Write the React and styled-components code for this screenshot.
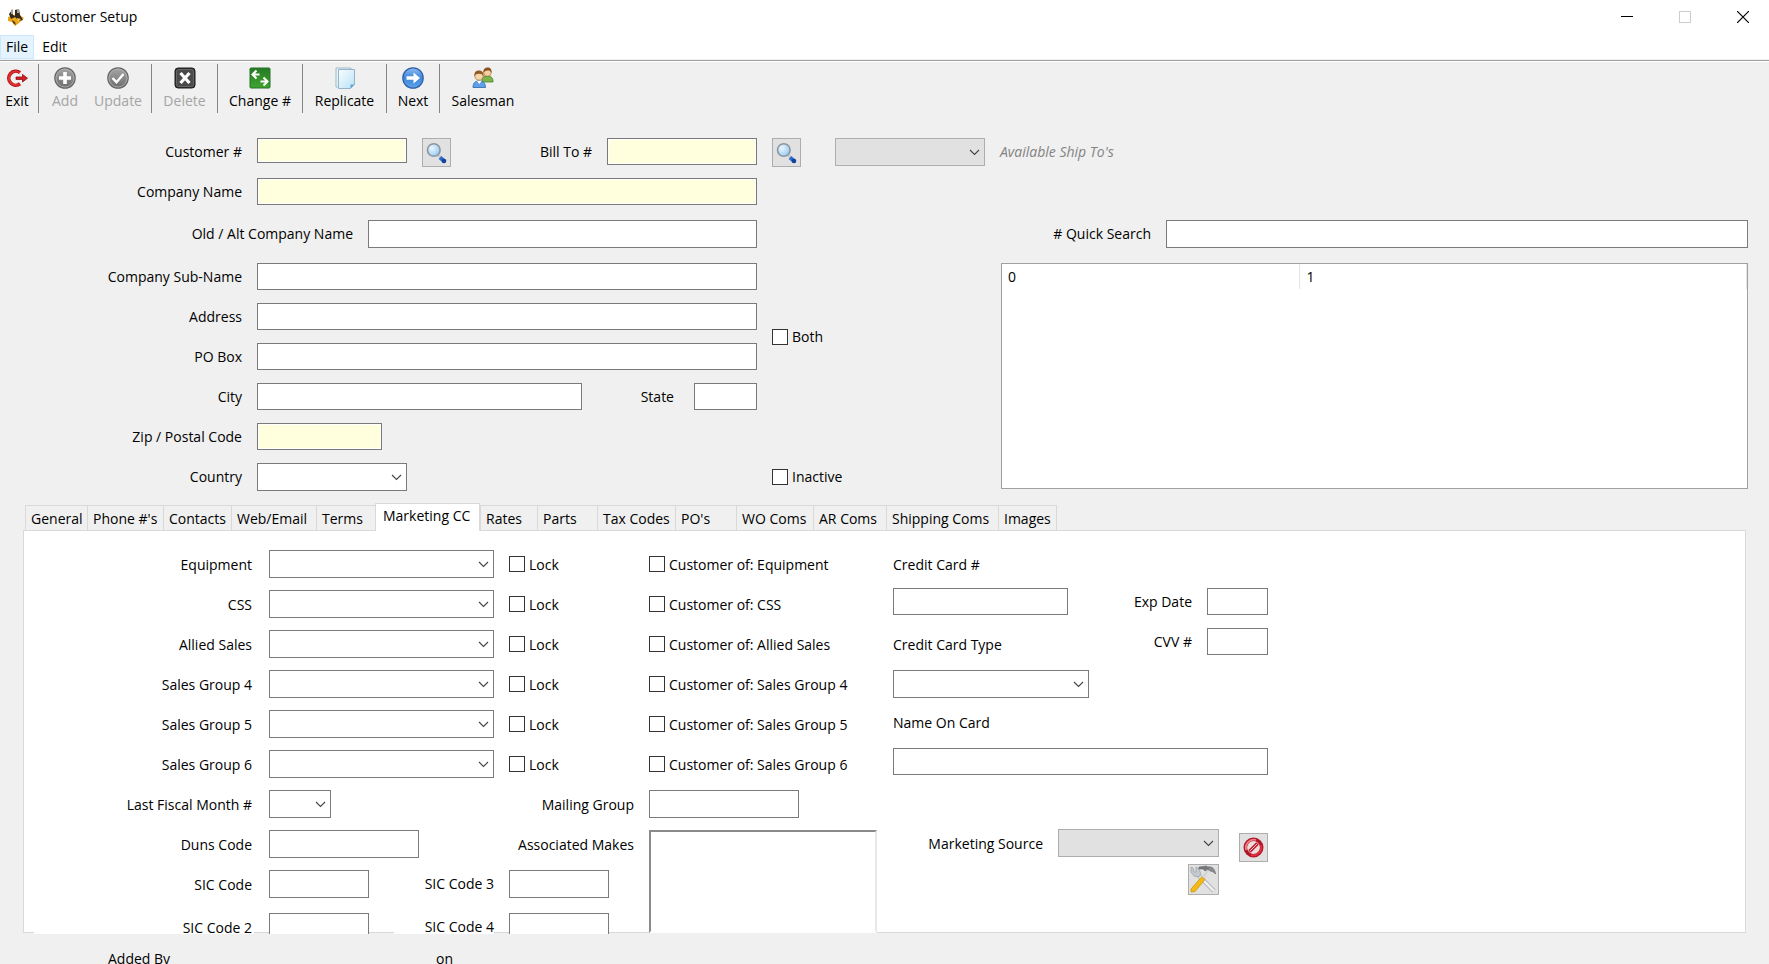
import React, { useState } from "react";
import styled, { createGlobalStyle, css } from "styled-components";

const GlobalStyle = createGlobalStyle`
  * {
    box-sizing: border-box;
  }
  body {
    margin: 0;
    background: #f0f0f0;
  }
  body, button, input, select, textarea {
    font-family: "Open Sans", "Noto Sans", sans-serif;
    font-size: 14px;
    color: #000;
  }
`;

const Window = styled.div`
  display: flex;
  flex-direction: column;
  height: 100vh;
  overflow: hidden;
  background: #f0f0f0;
`;

/* ---------- title bar and menu ---------- */

const TitleBar = styled.header`
  display: flex;
  align-items: center;
  height: 35px;
  flex-shrink: 0;
  padding: 0 20px 2px 7px;
  gap: 7px;
  background: #fff;
`;

const Title = styled.h1`
  flex: 1;
  margin: 0;
  font-size: 14px;
  font-weight: 400;
`;

const WindowButtons = styled.div`
  display: flex;
  gap: 46px;
`;

const WindowButton = styled.button`
  width: 12px;
  height: 12px;
  padding: 0;
  border: none;
  background: none;

  svg {
    display: block;
  }
`;

const MenuBar = styled.nav`
  display: flex;
  gap: 2px;
  height: 25px;
  flex-shrink: 0;
  background: #fff;
  border-bottom: 1px solid #f0f0f0;
`;

const MenuItem = styled.button`
  height: 24px;
  padding: 0 5px;
  line-height: 22px;
  border: 1px solid ${(p) => (p.$active ? "#cce8ff" : "transparent")};
  background: ${(p) => (p.$active ? "#e5f3ff" : "transparent")};
`;

/* ---------- toolbar ---------- */

const ToolBar = styled.div`
  display: flex;
  height: 55px;
  flex-shrink: 0;
  padding-top: 3px;
  border-top: 1px solid #a0a0a0;
  box-shadow: inset 0 1px 0 #fff;
`;

const ToolGroup = styled.div`
  display: flex;
  justify-content: ${(p) => (p.$center ? "center" : "flex-start")};
  width: ${(p) => p.$w}px;
  height: 49px;
  border-right: ${(p) => (p.$last ? "none" : "1px solid #858585")};
`;

const ToolButton = styled.button`
  display: flex;
  flex-direction: column;
  align-items: center;
  width: ${(p) => p.$w}px;
  gap: 2px;
  padding: 3px 0 0;
  border: none;
  background: none;
  line-height: 20px;
  white-space: nowrap;

  &:disabled {
    color: #a5a5a5;
  }
`;

/* ---------- form parts ---------- */

const TextInput = styled.input`
  width: ${(p) => (p.$w ? p.$w + "px" : "auto")};
  flex: ${(p) => (p.$w ? "none" : "1")};
  min-width: 0;
  height: ${(p) => p.$h || 27}px;
  padding: 0 4px;
  border: 1px solid #7a7a7a;
  border-radius: 0;
  outline: none;
  background: #fff;
  ${(p) =>
    p.$needed &&
    css`
      background: #ffffdd;
      box-shadow: inset 0 0 0 1px #fff;
    `}
`;

const SelectBox = styled.div`
  position: relative;
  width: ${(p) => p.$w}px;
  height: 28px;
  flex: none;

  select {
    appearance: none;
    width: 100%;
    height: 100%;
    padding: 0 22px 0 4px;
    border: 1px solid #7a7a7a;
    border-radius: 0;
    background: #fff;
    opacity: 1;
  }
  select:disabled {
    border-color: #adadad;
    background: #e1e1e1;
  }
  svg {
    position: absolute;
    right: 5px;
    top: 11px;
    pointer-events: none;
  }
`;

const IconButton = styled.button`
  display: grid;
  place-items: center;
  width: ${(p) => p.$w || 29}px;
  height: ${(p) => p.$h || 29}px;
  flex: none;
  padding: 0;
  border: 1px solid #adadad;
  background: #e1e1e1;
`;

const CheckLabel = styled.label`
  display: flex;
  align-items: center;
  gap: 4px;
  height: 27px;
  margin-top: ${(p) => p.$drop || 0}px;
  white-space: nowrap;

  input {
    appearance: none;
    width: 16px;
    height: 16px;
    margin: 0;
    border: 1px solid #333;
    background: #fff;
  }
  input:checked {
    background: #333;
    box-shadow: inset 0 0 0 3px #fff;
  }
`;

const Label = styled.label`
  width: ${(p) => p.$w || 242}px;
  flex: none;
  line-height: 27px;
  text-align: right;
  white-space: nowrap;
`;

const Form = styled.section`
  flex-shrink: 0;
  padding-top: 23px;
`;

const FormRow = styled.div`
  display: flex;
  align-items: flex-start;
  gap: 15px;
  height: ${(p) => p.$h || 40}px;
`;

const ShipTo = styled.div`
  display: flex;
  gap: 15px;
  margin-left: 19px;
`;

const Hint = styled.label`
  color: #838383;
  font-style: italic;
  line-height: 27px;
`;

const StateField = styled.div`
  display: flex;
  gap: 20px;
  justify-content: flex-end;
  width: 160px;
`;

const InactiveSlot = styled.div`
  margin-left: 350px;
`;

const FormBody = styled.div`
  display: flex;
`;

const FormLeft = styled.div`
  width: 1001px;
  flex: none;
`;

const QuickSearch = styled.div`
  display: flex;
  flex-direction: column;
  flex: 1;
  min-width: 0;
  padding: 42px 21px 14px 0;
`;

const ResultBox = styled.div`
  flex: 1;
  border: 1px solid #a0a0a0;
  background: #fff;
`;

const ResultTable = styled.table`
  width: 100%;
  border-collapse: collapse;
  table-layout: fixed;

  th {
    height: 25px;
    padding: 0 7px;
    border-right: 1px solid #e5e5e5;
    font-weight: 400;
    text-align: left;
  }
  th:first-child {
    width: 297px;
    padding-left: 6px;
  }
`;

/* ---------- tabs ---------- */

const TabStrip = styled.div`
  display: flex;
  align-items: flex-end;
  flex-shrink: 0;
  height: 27px;
  margin: 0 23px 0 25px;
`;

const Tab = styled.button`
  width: ${(p) => p.$w}px;
  height: 25px;
  flex: none;
  padding: 1px 0 0 5px;
  border: 1px solid #d9d9d9;
  border-width: 1px 0 0 1px;
  background: #f0f0f0;
  line-height: 22px;
  text-align: left;
  white-space: nowrap;

  &:last-child {
    border-right-width: 1px;
  }
  ${(p) =>
    p.$active &&
    css`
      z-index: 1;
      height: 28px;
      margin-bottom: -1px;
      padding: 0 0 3px 7px;
      border-right-width: 1px;
      background: #fff;
    `}
`;

const PageClip = styled.div`
  flex: 1;
  min-height: 0;
  overflow: hidden;
  padding: 0 23px 1px;
`;

const TabPage = styled.div`
  display: flex;
  gap: 15px;
  height: 100%;
  padding: 13px 0 0 9px;
  border: 1px solid #d9d9d9;
  background: #fff;
`;

const MarketingGrid = styled.div`
  display: grid;
  flex: none;
  grid-template-columns: 221px 225px 125px 229px;
  grid-template-rows: repeat(9, 40px) 46px;
  column-gap: 15px;
  align-items: center;
`;

const GridLabel = styled.label`
  justify-self: end;
  width: ${(p) => p.$w}px;
  padding-right: ${(p) => (p.$pad ? 2 : 0)}px;
  background: #fff;
  line-height: 27px;
  text-align: right;
  white-space: nowrap;
`;

const MakesList = styled.textarea`
  grid-row: 8 / 11;
  grid-column: 4;
  align-self: start;
  width: 228px;
  height: 103px;
  margin-top: 6px;
  border: 2px solid;
  border-color: #8a8a8a #e8e8e8 #fff #8a8a8a;
  border-radius: 0;
  background: #fff;
  resize: none;
`;

const SicRow = styled.div`
  display: flex;
  grid-column: 2 / 4;
  gap: 15px;
  height: 28px;
`;

const SicFirst = styled.div`
  display: flex;
  justify-content: space-between;
  width: 225px;
`;

const CardColumn = styled.div`
  width: 375px;
  flex: none;
`;

const CardGrid = styled.div`
  display: grid;
  grid-template-columns: 196px 179px;
  grid-template-rows: 40px 35px 50px 30px 46px 33px 46px;
  align-items: center;
`;

const CardSide = styled.div`
  display: flex;
  flex-direction: column;
  align-self: start;
  grid-row: 2 / 4;
  grid-column: 2;
  gap: 13px;
  padding-top: 4px;
`;

const SideField = styled.div`
  display: flex;
  justify-content: flex-end;
  gap: 15px;
  height: 27px;
`;

const CardName = styled.div`
  display: flex;
  grid-column: 1 / 3;
  grid-row: 6;
`;

const CardCell = styled.div`
  display: flex;
  grid-column: 1;
  grid-row: ${(p) => p.$row};
`;

const SourceGrid = styled.div`
  display: grid;
  grid-template-columns: 150px 161px 34px;
  grid-template-rows: 38px 34px;
  column-gap: 15px;
  align-items: center;
  justify-items: end;

  > ${IconButton} {
    align-self: end;
  }
`;

const ToolsSlot = styled.div`
  grid-column: 2;
  grid-row: 2;
`;

const Footer = styled.footer`
  display: flex;
  height: 30px;
  flex-shrink: 0;
  padding: 15px 0 0 108px;
  overflow: hidden;
  line-height: 20px;
`;

const FooterText = styled.span`
  width: 328px;
  flex: none;
`;

/* ---------- icons ---------- */

const AppIcon = () => (
  <svg width="18" height="18" viewBox="0 0 18 18">
    <path d="M1 9l5-2 5-1 6 4-5 5-4 3-3-4-4-1z" fill="#e9a61c" />
    <path d="M2 6l3-4 1 5 2 1V2l4-1 1 6 3 5-4 1-4-4-4 2z" fill="#33291d" />
    <path d="M4 2l2-1v5H4zM10 1h2v4h-2z" fill="#a9a49a" />
    <path d="M5 12l3 2 1 3-3-2z" fill="#5a3d0b" />
    <path d="M10 10l4 1-3 3z" fill="#ffc83a" />
  </svg>
);

const ExitIcon = () => (
  <svg width="22" height="22" viewBox="0 0 22 22">
    <path d="M14 5.600A7 7 0 1 0 14 16.800" fill="none" stroke="#b3121a" strokeWidth="3.600" />
    <path d="M13.800 5.800A6.800 6.800 0 1 0 13.800 16.600" fill="none" stroke="#e6322f" strokeWidth="1.800" />
    <path d="M10 10h6.500V7.400l5 3.800-5 3.800v-2.600H10z" fill="#d41f25" stroke="#8f0d12" strokeWidth=".8" />
  </svg>
);

const AddIcon = () => (
  <svg width="22" height="22" viewBox="0 0 22 22">
    <defs>
      <linearGradient id="grayBall" x1="0" y1="0" x2="0" y2="1">
        <stop offset="0" stopColor="#a6a6a6" />
        <stop offset="1" stopColor="#6c6c6c" />
      </linearGradient>
    </defs>
    <circle cx="11" cy="11" r="10.200" fill="url(#grayBall)" stroke="#666" strokeWidth="1.200" />
    <circle cx="11" cy="11" r="9" fill="none" stroke="#b5b5b5" strokeWidth=".8" />
    <path d="M9.200 5h3.600v4.200H17v3.600h-4.200V17H9.200v-4.200H5V9.200h4.200z" fill="#fff" />
  </svg>
);

const UpdateIcon = () => (
  <svg width="22" height="22" viewBox="0 0 22 22">
    <circle cx="11" cy="11" r="10.200" fill="url(#grayBall)" stroke="#666" strokeWidth="1.200" />
    <circle cx="11" cy="11" r="9" fill="none" stroke="#b5b5b5" strokeWidth=".8" />
    <path d="M5.500 11l4 4.200 7-8.200" fill="none" stroke="#fff" strokeWidth="2.400" />
  </svg>
);

const DeleteIcon = () => (
  <svg width="22" height="22" viewBox="0 0 22 22">
    <rect x="1" y="1" width="20" height="20" rx="3" fill="#333" stroke="#1c1c1c" />
    <rect x="2.500" y="2.500" width="17" height="17" rx="2" fill="#4a4a4a" stroke="#777" strokeWidth=".7" />
    <path d="M6.500 6l9 10M15.500 6l-9 10" stroke="#fff" strokeWidth="3.200" />
  </svg>
);

const ChangeIcon = () => (
  <svg width="22" height="22" viewBox="0 0 22 22">
    <defs>
      <linearGradient id="greenSquare" x1="0" y1="0" x2="0" y2="1">
        <stop offset="0" stopColor="#267a24" />
        <stop offset="1" stopColor="#3fa52f" />
      </linearGradient>
    </defs>
    <rect x="1" y="1" width="20" height="20" rx="1" fill="url(#greenSquare)" stroke="#27702a" />
    <path d="M7.500 3.500L3.500 7.500l4 4M4 7.500h6.500M14.500 10.500l4 4-4 4M18 14.500h-6.500" fill="none" stroke="#fff" strokeWidth="2" />
  </svg>
);

const ReplicateIcon = () => (
  <svg width="22" height="22" viewBox="0 0 22 22">
    <defs>
      <linearGradient id="paper" x1="0" y1="0" x2="1" y2="1">
        <stop offset="0" stopColor="#fafdff" />
        <stop offset="1" stopColor="#b9e2f7" />
      </linearGradient>
    </defs>
    <path d="M2 1h15v19H2z" fill="#e4f3fb" stroke="#9db9c9" />
    <path d="M4.500 2.500h16v15l-4 4h-12z" fill="url(#paper)" stroke="#93b3c6" />
    <path d="M20.500 17.500h-4v4z" fill="#5aa6d6" />
  </svg>
);

const NextIcon = () => (
  <svg width="22" height="22" viewBox="0 0 22 22">
    <defs>
      <linearGradient id="blueBall" x1="0" y1="0" x2="0" y2="1">
        <stop offset="0" stopColor="#8dbcf0" />
        <stop offset=".5" stopColor="#3f86d8" />
        <stop offset="1" stopColor="#5ea4ea" />
      </linearGradient>
    </defs>
    <circle cx="11" cy="11" r="10.200" fill="url(#blueBall)" stroke="#2b5fa8" strokeWidth="1.200" />
    <path d="M4.500 9.200h7V5.500l6.500 5.500-6.500 5.500v-3.700h-7z" fill="#fff" />
  </svg>
);

const SalesmanIcon = () => (
  <svg width="22" height="22" viewBox="0 0 22 22">
    <path d="M10 14c0-4 2-5 5-5s6 1 6 5v1H10z" fill="#7cb34a" stroke="#4c7f2a" strokeWidth=".8" />
    <circle cx="15.500" cy="5.500" r="3.800" fill="#f5cfa0" stroke="#9a6426" strokeWidth=".6" />
    <path d="M11.500 6c-.5-4 1.500-5.500 4.200-5.500S20 2.500 19.500 6c-1-2-1.500-2.500-4-2.500s-3 1-4 2.500z" fill="#8a5420" />
    <path d="M1 20.500c0-5 2.500-6.500 6-6.500s6.500 1.500 6.500 6.500z" fill="#5fa0e6" stroke="#2e64ac" strokeWidth=".8" />
    <path d="M5 14l2.300 3L9.500 14z" fill="#fff" />
    <circle cx="7" cy="9" r="4.200" fill="#f7d5aa" stroke="#9a6426" strokeWidth=".6" />
    <path d="M2.500 9.500C2 5 4 3.500 7 3.500s5 2 4.500 6C10.500 7.500 9.500 6.800 7 6.800s-3.500.7-4.500 2.700z" fill="#915a22" />
  </svg>
);

const SearchIcon = () => (
  <svg width="21" height="22" viewBox="0 0 21 22">
    <defs>
      <radialGradient id="lens" cx=".35" cy=".35" r=".8">
        <stop offset="0" stopColor="#eaf7ff" />
        <stop offset="1" stopColor="#8cc4f2" />
      </radialGradient>
    </defs>
    <path d="M12 13l3 3" stroke="#c9ccd0" strokeWidth="3" />
    <path d="M14 15.500l4 3.500" stroke="#2a6ac8" strokeWidth="4" />
    <circle cx="18" cy="19" r="2.300" fill="#12429a" />
    <circle cx="7.800" cy="8" r="6.300" fill="url(#lens)" stroke="#8f959b" strokeWidth="1.600" />
  </svg>
);

const ForbidIcon = () => (
  <svg width="21" height="21" viewBox="0 0 21 21">
    <circle cx="10.500" cy="10.500" r="8.200" fill="#ecdcdc" stroke="#b0182a" strokeWidth="3.600" />
    <path d="M3.200 13A8 8 0 0 1 13 3" fill="none" stroke="#ef8088" strokeWidth="1.800" />
    <path d="M17.800 8A8 8 0 0 1 8 18" fill="none" stroke="#e2303e" strokeWidth="2" />
    <path d="M6.500 14.500l8-8" stroke="#c01c30" strokeWidth="3.600" />
    <path d="M7 14l7-7" stroke="#f3c3c6" strokeWidth="1" />
  </svg>
);

const ToolsIcon = () => (
  <svg width="29" height="29" viewBox="0 0 29 29">
    <path d="M10 11l15 15" stroke="#a5a7aa" strokeWidth="4.200" />
    <path d="M10 11l15 15" stroke="#eceef0" strokeWidth="2.600" />
    <path d="M2 2v5l3 4 5 1 2-3-2-5-3-2v5L5 7 4 3z" fill="#c4c9ce" stroke="#a0a5aa" strokeWidth=".8" />
    <path d="M19 5l-5 8" stroke="#d2d4d6" strokeWidth="2.600" />
    <path d="M10 2l8-1 1 3-3 2-2-2h-4z" fill="#77797b" stroke="#66686a" strokeWidth=".6" />
    <path d="M19 2c4-1 7 2 7.500 7l-2-2-3-1-2-1z" fill="#8b8d8f" stroke="#5b5d5f" strokeWidth=".6" />
    <path d="M12.500 12l3.500 2.500L6 26.500l-4 .5v-3z" fill="#f5b916" stroke="#cf930a" strokeWidth=".8" />
  </svg>
);

/* ---------- small components ---------- */

const toId = (text) => text.toLowerCase().replace(/[^a-z0-9]+/g, "-");

function Select({ id, w, disabled }) {
  return (
    <SelectBox $w={w}>
      <select id={id} disabled={disabled} defaultValue="">
        <option value=""></option>
      </select>
      <svg width="11" height="7" viewBox="0 0 11 7">
        <path d="M1 1l4.500 4.500L10 1" fill="none" stroke="#444" strokeWidth="1.100" />
      </svg>
    </SelectBox>
  );
}

function Check({ text, drop }) {
  return (
    <CheckLabel $drop={drop}>
      <input type="checkbox" />
      {text}
    </CheckLabel>
  );
}

function Field({ label, labelWidth, w, h, needed, rowHeight, children }) {
  return (
    <FormRow $h={rowHeight}>
      <Label htmlFor={toId(label)} $w={labelWidth}>{label}</Label>
      <TextInput id={toId(label)} $w={w} $h={h} $needed={needed} />
      {children}
    </FormRow>
  );
}

function SicPair({ first, label, second }) {
  return (
    <SicRow>
      <SicFirst>
        <TextInput id={first} $w={100} $h={28} />
        <GridLabel $w={100} htmlFor={second}>{label}</GridLabel>
      </SicFirst>
      <TextInput id={second} $w={100} $h={28} />
    </SicRow>
  );
}

const toolGroups = [
  { w: 39, items: [{ text: "Exit", icon: <ExitIcon />, w: 34 }] },
  {
    w: 113,
    items: [
      { text: "Add", icon: <AddIcon />, w: 52, disabled: true },
      { text: "Update", icon: <UpdateIcon />, w: 54, disabled: true },
    ],
  },
  { w: 66, items: [{ text: "Delete", icon: <DeleteIcon />, w: 66, disabled: true }] },
  { w: 85, items: [{ text: "Change #", icon: <ChangeIcon />, w: 86 }] },
  { w: 84, items: [{ text: "Replicate", icon: <ReplicateIcon />, w: 86 }] },
  { w: 53, items: [{ text: "Next", icon: <NextIcon />, w: 54 }] },
  { w: 86, items: [{ text: "Salesman", icon: <SalesmanIcon />, w: 86 }] },
];

const tabs = [
  ["General", 62],
  ["Phone #'s", 76],
  ["Contacts", 68],
  ["Web/Email", 85],
  ["Terms", 59],
  ["Marketing CC", 105],
  ["Rates", 57],
  ["Parts", 60],
  ["Tax Codes", 78],
  ["PO's", 61],
  ["WO Coms", 77],
  ["AR Coms", 73],
  ["Shipping Coms", 112],
  ["Images", 59],
];

const salesGroups = [
  "Equipment",
  "CSS",
  "Allied Sales",
  "Sales Group 4",
  "Sales Group 5",
  "Sales Group 6",
];

function MarketingPage() {
  return (
    <TabPage role="tabpanel">
      <MarketingGrid>
        {salesGroups.map((name) => (
          <React.Fragment key={name}>
            <GridLabel $w={220} $pad htmlFor={toId(name)}>{name}</GridLabel>
            <Select id={toId(name)} w={225} />
            <Check text="Lock" />
            <Check text={"Customer of: " + name} />
          </React.Fragment>
        ))}

        <GridLabel $w={220} $pad htmlFor="fiscal">Last Fiscal Month #</GridLabel>
        <Select id="fiscal" w={62} />
        <GridLabel htmlFor="mailing">Mailing Group</GridLabel>
        <TextInput id="mailing" $w={150} $h={28} />

        <GridLabel $w={220} $pad htmlFor="duns">Duns Code</GridLabel>
        <TextInput id="duns" $w={150} $h={28} />
        <GridLabel htmlFor="makes">Associated Makes</GridLabel>
        <MakesList id="makes" />

        <GridLabel $w={220} $pad htmlFor="sic1">SIC Code</GridLabel>
        <SicPair first="sic1" label="SIC Code 3" second="sic3" />

        <GridLabel $w={220} $pad htmlFor="sic2">SIC Code 2</GridLabel>
        <SicPair first="sic2" label="SIC Code 4" second="sic4" />
      </MarketingGrid>

      <CardColumn>
        <CardGrid>
          <CardCell as="label" htmlFor="card" $row={1}>Credit Card #</CardCell>
          <CardCell $row={2}><TextInput id="card" $w={175} /></CardCell>
          <CardSide>
            <SideField>
              <Label $w={90} htmlFor="exp">Exp Date</Label>
              <TextInput id="exp" $w={61} />
            </SideField>
            <SideField>
              <Label $w={90} htmlFor="cvv">CVV #</Label>
              <TextInput id="cvv" $w={61} />
            </SideField>
          </CardSide>
          <CardCell as="label" htmlFor="cardtype" $row={3}>Credit Card Type</CardCell>
          <CardCell $row={4}><Select id="cardtype" w={196} /></CardCell>
          <CardCell as="label" htmlFor="cardname" $row={5}>Name On Card</CardCell>
          <CardName><TextInput id="cardname" /></CardName>
        </CardGrid>
        <SourceGrid>
          <GridLabel htmlFor="source">Marketing Source</GridLabel>
          <Select id="source" w={161} disabled />
          <IconButton aria-label="Clear marketing source"><ForbidIcon /></IconButton>
          <ToolsSlot>
            <IconButton $w={31} $h={31} aria-label="Edit marketing sources"><ToolsIcon /></IconButton>
          </ToolsSlot>
        </SourceGrid>
      </CardColumn>
    </TabPage>
  );
}

export default function App() {
  const [tab, setTab] = useState("Marketing CC");

  return (
    <Window>
      <GlobalStyle />
      <TitleBar>
        <AppIcon />
        <Title>Customer Setup</Title>
        <WindowButtons>
          <WindowButton aria-label="Minimize">
            <svg width="12" height="12"><path d="M0 5.500h12" stroke="#000" /></svg>
          </WindowButton>
          <WindowButton aria-label="Maximize" disabled>
            <svg width="12" height="12"><rect x=".5" y=".5" width="11" height="11" fill="none" stroke="#ccc" /></svg>
          </WindowButton>
          <WindowButton aria-label="Close">
            <svg width="12" height="12"><path d="M0 0l12 12M12 0L0 12" stroke="#000" strokeWidth="1.200" /></svg>
          </WindowButton>
        </WindowButtons>
      </TitleBar>
      <MenuBar>
        <MenuItem $active>File</MenuItem>
        <MenuItem>Edit</MenuItem>
      </MenuBar>

      <ToolBar role="toolbar">
        {toolGroups.map((group, i) => (
          <ToolGroup
            key={i}
            $w={group.w}
            $center={i > 1}
            $last={i === toolGroups.length - 1}
          >
            {group.items.map((item) => (
              <ToolButton key={item.text} $w={item.w} disabled={item.disabled}>
                {item.icon}
                {item.text}
              </ToolButton>
            ))}
          </ToolGroup>
        ))}
      </ToolBar>

      <Form>
        <Field label="Customer #" w={150} h={25} needed>
          <IconButton aria-label="Find customer"><SearchIcon /></IconButton>
          <Label $w={126} htmlFor="billto">Bill To #</Label>
          <TextInput id="billto" $w={150} $needed />
          <IconButton aria-label="Find bill to"><SearchIcon /></IconButton>
          <ShipTo>
            <Select id="shipto" w={150} disabled />
            <Hint htmlFor="shipto">Available Ship To's</Hint>
          </ShipTo>
        </Field>
        <FormBody>
          <FormLeft>
            <Field label="Company Name" w={500} rowHeight={42} needed />
            <Field label="Old / Alt Company Name" labelWidth={353} w={389} h={28} rowHeight={43} />
            <Field label="Company Sub-Name" w={500} />
            <Field label="Address" w={500}>
              <Check text="Both" drop={20} />
            </Field>
            <Field label="PO Box" w={500} />
            <Field label="City" w={325}>
              <StateField>
                <Label $w={77} htmlFor="state">State</Label>
                <TextInput id="state" $w={63} />
              </StateField>
            </Field>
            <Field label="Zip / Postal Code" w={125} needed />
            <FormRow>
              <Label htmlFor="country">Country</Label>
              <Select id="country" w={150} />
              <InactiveSlot>
                <Check text="Inactive" />
              </InactiveSlot>
            </FormRow>
          </FormLeft>
          <QuickSearch>
            <FormRow $h={43}>
              <Label $w={150} htmlFor="quick"># Quick Search</Label>
              <TextInput id="quick" $h={28} />
            </FormRow>
            <ResultBox>
              <ResultTable>
                <thead>
                  <tr>
                    <th>0</th>
                    <th>1</th>
                  </tr>
                </thead>
              </ResultTable>
            </ResultBox>
          </QuickSearch>
        </FormBody>
      </Form>

      <TabStrip role="tablist">
        {tabs.map(([name, w]) => (
          <Tab
            key={name}
            role="tab"
            aria-selected={tab === name}
            $w={w}
            $active={tab === name}
            onClick={() => setTab(name)}
          >
            {name}
          </Tab>
        ))}
      </TabStrip>
      <PageClip>
        <MarketingPage />
      </PageClip>

      <Footer>
        <FooterText>Added By</FooterText>
        <FooterText>on</FooterText>
      </Footer>
    </Window>
  );
}
